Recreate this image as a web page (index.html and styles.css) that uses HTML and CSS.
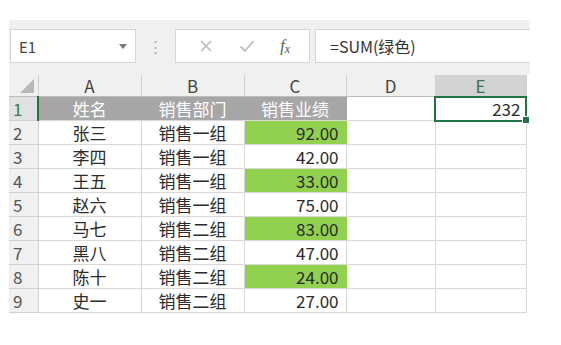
FILE: index.html
```html
<!DOCTYPE html>
<html>
    <head>
        <meta charset="utf-8">
        <title>销售业绩</title>
        <link rel="stylesheet" href="styles.css">
    </head>
    <body>
        <div class="sheet">
            <div class="toolbar">
                <div class="name-box">
                    <span>E1</span>
                    <span class="arrow"></span>
                </div>
                <div class="grip">⋮</div>
                <div class="buttons">
                    <svg width="14" height="14" viewBox="0 0 14 14">
                        <path d="M2 2 L12 12 M12 2 L2 12" stroke="#bdbdbd" stroke-width="1.6" fill="none"/>
                    </svg>
                    <svg width="16" height="14" viewBox="0 0 16 14">
                        <path d="M1.5 7.5 L6 12 L14.5 2" stroke="#bdbdbd" stroke-width="1.8" fill="none"/>
                    </svg>
                    <span class="fx">f<span class="x">x</span></span>
                </div>
                <div class="formula">=SUM(绿色)</div>
            </div>

            <table class="grid">
                <colgroup>
                    <col style="width: 29px">
                    <col style="width: 103px">
                    <col style="width: 103px">
                    <col style="width: 102px">
                    <col style="width: 89px">
                    <col style="width: 91px">
                </colgroup>
                <tr class="heads">
                    <th class="corner"><span class="tri"></span></th>
                    <th>A</th>
                    <th>B</th>
                    <th>C</th>
                    <th>D</th>
                    <th class="active">E</th>
                </tr>
                <tr>
                    <th class="row active">1</th>
                    <td class="title">姓名</td>
                    <td class="title">销售部门</td>
                    <td class="title">销售业绩</td>
                    <td></td>
                    <td class="num selected">232<span class="handle"></span></td>
                </tr>
                <tr>
                    <th class="row">2</th><td class="mid">张三</td><td class="mid">销售一组</td><td class="num green">92.00</td><td></td><td></td>
                </tr>
                <tr>
                    <th class="row">3</th><td class="mid">李四</td><td class="mid">销售一组</td><td class="num">42.00</td><td></td><td></td>
                </tr>
                <tr>
                    <th class="row">4</th><td class="mid">王五</td><td class="mid">销售一组</td><td class="num green">33.00</td><td></td><td></td>
                </tr>
                <tr>
                    <th class="row">5</th><td class="mid">赵六</td><td class="mid">销售一组</td><td class="num">75.00</td><td></td><td></td>
                </tr>
                <tr>
                    <th class="row">6</th><td class="mid">马七</td><td class="mid">销售二组</td><td class="num green">83.00</td><td></td><td></td>
                </tr>
                <tr>
                    <th class="row">7</th><td class="mid">黑八</td><td class="mid">销售二组</td><td class="num">47.00</td><td></td><td></td>
                </tr>
                <tr>
                    <th class="row">8</th><td class="mid">陈十</td><td class="mid">销售二组</td><td class="num green">24.00</td><td></td><td></td>
                </tr>
                <tr>
                    <th class="row">9</th><td class="mid">史一</td><td class="mid">销售二组</td><td class="num">27.00</td><td></td><td></td>
                </tr>
            </table>
        </div>
    </body>
</html>
```

FILE: styles.css
```css
body {
    margin: 0;
    background: white;
    font-family: "Noto Sans CJK SC", "Liberation Sans", sans-serif;
}

.sheet {
    margin: 20px 0 0 9px;
    width: 521px;
}

.toolbar {
    background: #f0f0f0;
    height: 55px;
    padding-top: 9px;
    box-sizing: border-box;
    display: flex;
    align-items: flex-start;
}

.name-box {
    margin-left: 1px;
    width: 126px;
    height: 34px;
    box-sizing: border-box;
    background: white;
    border: 1px solid #d6d6d6;
    display: flex;
    align-items: center;
    justify-content: space-between;
    padding: 0 8px 0 8px;
    font-size: 15px;
    color: #444;
}

.arrow {
    width: 0;
    height: 0;
    border-left: 4px solid transparent;
    border-right: 4px solid transparent;
    border-top: 5px solid #777;
}

.grip {
    width: 39px;
    text-align: center;
    line-height: 34px;
    color: #aaa;
    font-size: 15px;
}

.buttons {
    width: 135px;
    height: 34px;
    box-sizing: border-box;
    background: white;
    border: 1px solid #d6d6d6;
    display: flex;
    align-items: center;
    justify-content: space-around;
    padding: 0 6px 0 10px;
}

.fx {
    font-family: "Liberation Serif", serif;
    font-style: italic;
    font-size: 16px;
    color: #555;
}
.fx .x {
    font-size: 12px;
    position: relative;
    top: 2px;
}

.formula {
    margin-left: 5px;
    flex: 1;
    height: 34px;
    box-sizing: border-box;
    background: white;
    border: 1px solid #d6d6d6;
    border-right: none;
    line-height: 32px;
    padding-left: 14px;
    font-size: 16px;
    color: #333;
}

.grid {
    border-collapse: collapse;
    table-layout: fixed;
    width: 517px;
}

.grid th,
.grid td {
    padding: 0;
    height: 23px;
    line-height: 22px;
    border: 1px solid #d8d8d8;
    font-size: 17px;
    font-weight: normal;
    overflow: visible;
    white-space: nowrap;
}

.heads th {
    height: 21px;
    line-height: 20px;
    background: #f0f0f0;
    color: #444;
    font-size: 17px;
    border-top: none;
    border-color: #d0d0d0;
    border-bottom-color: #bdbdbd;
}
.heads th:first-child {
    border-left: none;
}

.corner {
    position: relative;
}
.tri {
    position: absolute;
    right: 4px;
    bottom: 3px;
    width: 0;
    height: 0;
    border-left: 14px solid transparent;
    border-bottom: 14px solid #b8b8b8;
}

.heads th.active {
    background: #d3d3d3;
    color: #3d6b4f;
}

.row {
    background: #f0f0f0;
    color: #555;
    text-align: left;
    padding-left: 4px !important;
    border-left: none !important;
    border-color: #d0d0d0 !important;
}
.row.active {
    background: #e1e1e1;
    color: #3d7a55;
    border-right: 2px solid #217346 !important;
}

.title {
    background: #a6a6a6;
    color: white;
    text-align: center;
    border-color: #a6a6a6 !important;
    border-bottom-color: #d8d8d8 !important;
}

.mid {
    text-align: center;
    color: #2b2b2b;
}

.num {
    text-align: right;
    padding-right: 7px !important;
    color: #2b2b2b;
}

.green {
    background: #92d050;
    border-color: #92d050 !important;
    border-bottom-color: #d8d8d8 !important;
}

.selected {
    position: relative;
    padding-right: 5px !important;
    outline: 2px solid #217346;
    outline-offset: -1px;
}
.handle {
    position: absolute;
    right: -4px;
    bottom: -4px;
    width: 6px;
    height: 6px;
    background: #217346;
    border: 1px solid white;
}
```
